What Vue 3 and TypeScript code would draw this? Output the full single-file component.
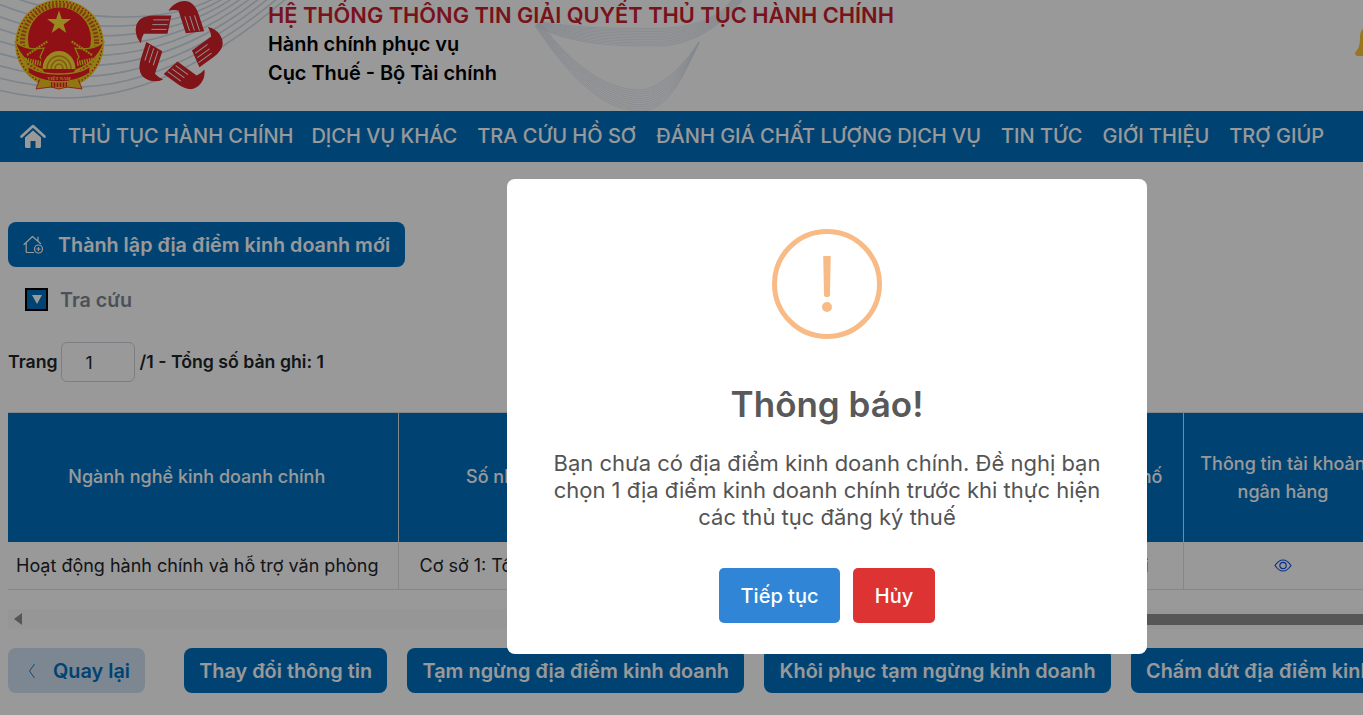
<script setup lang="ts">
const navItems: string[] = ['THỦ TỤC HÀNH CHÍNH', 'DỊCH VỤ KHÁC', 'TRA CỨU HỒ SƠ', 'ĐÁNH GIÁ CHẤT LƯỢNG DỊCH VỤ', 'TIN TỨC', 'GIỚI THIỆU', 'TRỢ GIÚP']
const actions: string[] = ['Thay đổi thông tin', 'Tạm ngừng địa điểm kinh doanh', 'Khôi phục tạm ngừng kinh doanh', 'Chấm dứt địa điểm kinh doanh']
const hands: number[] = [0, 72, 144, 216, 288]

const leftCurves: string[] = Array.from({ length: 9 }, (_, i) => {
  const a = -12 + i * 12.500
  return `M-10 ${a} C 80 ${a + 40 - i * 2} 170 ${a + 34 - i * 3} ${215 + i * 9} -2`
})
const deepWave: string[] = Array.from({ length: 11 }, (_, i) => {
  const d = i * 2.100
  return `M${535 + i * 0.5} ${26 - i * 0.4} C ${565 + i} 70 ${600 + i} ${111 - d} 640 ${111 - d} C ${668 - i} ${111 - d} 684 ${76 - d / 2} 699 42`
})
const shallowWave: string[] = Array.from({ length: 12 }, (_, i) => {
  const d = i * 1.600
  return `M${535 + i * 0.5} ${26 - i * 0.4} C 575 ${46 - d} 620 ${46 - d} 656 ${46 - d} C 692 ${46 - d} 722 ${26 - d / 2} ${744 - i} -2`
})
</script>

<template>
  <div class="page">
    <header class="header">
      <svg class="curves" viewBox="0 0 1363 111" width="1363" height="111" aria-hidden="true">
        <path v-for="(d, i) in leftCurves" :key="'l' + i" :d="d" class="curve-thick" />
        <path v-for="(d, i) in deepWave" :key="'d' + i" :d="d" class="curve-thin" />
        <path v-for="(d, i) in shallowWave" :key="'s' + i" :d="d" class="curve-thin" />
      </svg>

      <svg class="emblem" viewBox="0 0 92 94" width="92" height="94" aria-hidden="true">
        <circle cx="46.500" cy="46" r="44.500" fill="#f2d21f" />
        <circle cx="46.500" cy="46" r="42.500" fill="none" stroke="#e21d20" stroke-width="1.400" stroke-dasharray="1.500 2" />
        <circle cx="46.500" cy="44" r="37" fill="none" stroke="#d8611c" stroke-width="5" stroke-dasharray="2 1.700" />
        <circle cx="46.500" cy="41" r="31.500" fill="#ee1d23" />
        <polygon points="46,12.500 48.800,21.100 57.900,21.100 50.600,26.500 53.300,35.100 46,29.800 38.700,35.100 41.400,26.500 34.100,21.100 43.200,21.100" fill="#ffe135" />
        <path d="M2 44 C 10 50 20 52 31 50 L27 59 L36 74 C 22 70 8 62 2 44 Z" fill="#ee1d23" stroke="#f2d21f" stroke-width="1.200" />
        <path d="M91 44 C 83 50 73 52 62 50 L66 59 L57 74 C 71 70 85 62 91 44 Z" fill="#ee1d23" stroke="#f2d21f" stroke-width="1.200" />
        <path d="M14 57 L35 43 M79 57 L58 43" stroke="#f2d21f" stroke-width="2.200" stroke-dasharray="2 .8" fill="none" />
        <path d="M12 62 L30 66 M80 62 L62 66" stroke="#f2d21f" stroke-width="5" stroke-dasharray="1.500 1" fill="none" />
        <circle cx="46" cy="64" r="18" fill="#ee1d23" />
        <path d="M29.500 71 A16.500 18 0 0 1 62.500 71 Z" fill="#ffe135" />
        <path d="M34 71 A12 13 0 0 1 58 71 M38 71 A8 9 0 0 1 54 71 M42 71 A4 5 0 0 1 50 71" fill="none" stroke="#d9961a" stroke-width="1.500" />
        <path d="M28 78 L23 91 L38 89 L46 91 L54 89 L69 91 L64 78 Z" fill="#f2c51f" stroke="#e21d20" stroke-width=".8" />
        <path d="M38 81 h16 v8 h-16 Z" fill="#ee1d23" />
        <path d="M40 81 v8 M43 81 v8 M46 81 v8 M49 81 v8 M52 81 v8" stroke="#ffe135" stroke-width="1.100" />
        <path d="M15 68 C 22 74 34 76 46 76 C 58 76 70 74 77 68 L77 75 C 68 81 58 84 46 84 C 34 84 24 81 15 75 Z" fill="#ee1d23" stroke="#f2d21f" stroke-width="1.300" />
        <text x="46" y="81.500" class="emblem-text" text-anchor="middle">VIỆT NAM</text>
      </svg>

      <svg class="hands" viewBox="-50 -50 100 100" width="100" height="100" aria-hidden="true">
        <g v-for="deg in hands" :key="deg" :transform="`rotate(${deg}) scale(.95)`">
          <path d="M-6 -32 L-24 -32 Q-43 -32 -43.500 -17 Q-43.500 -9 -38 -3 Q-37.500 -9 -35 -13 L-10 -13 Z" fill="#d62229" />
          <path d="M-8 -27.500 H-25 M-10 -22.500 H-26 M-11 -17.500 H-27" stroke="#f2f2f2" stroke-width="1" fill="none" />
        </g>
      </svg>

      <div class="titles">
        <div class="title">HỆ THỐNG THÔNG TIN GIẢI QUYẾT THỦ TỤC HÀNH CHÍNH</div>
        <div class="subtitle">Hành chính phục vụ</div>
        <div class="subtitle">Cục Thuế - Bộ Tài chính</div>
      </div>

      <svg class="bell" viewBox="0 0 26 32" width="26" height="32" aria-hidden="true">
        <path d="M13 0 C 7 0 5 5 5 11 C 5 18 3.500 22 0.500 25 C -0.500 27 0.500 29 3 29 H23 C 25.500 29 26.500 27 25.500 25 C 22.500 22 21 18 21 11 C 21 5 19 0 13 0 Z" fill="#fdc43a" />
      </svg>
    </header>

    <nav class="nav">
      <svg class="home" viewBox="0 0 26 25" width="26" height="25" aria-hidden="true">
        <path d="M1.500 12.500 L13 2 L24.500 12.500" fill="none" stroke="#fff" stroke-width="2.600" stroke-linecap="round" stroke-linejoin="round" />
        <path d="M5 13.500 L13 6.500 L21 13.500 V22.500 Q21 24 19.500 24 H15.500 V17 H10.500 V24 H6.500 Q5 24 5 22.500 Z" fill="#fff" />
      </svg>
      <a v-for="item in navItems" :key="item" class="nav-item">{{ item }}</a>
    </nav>

    <main class="main">
      <button class="btn btn-add">
        <svg viewBox="0 0 21 19" width="21" height="19" fill="none" stroke="#fff" stroke-width="1.200" aria-hidden="true">
          <path d="M1 9.500 L9.500 1.500 L17.500 8.500 M15 2 V5.500 M3.200 8 V16.500 Q3.200 17.500 4.200 17.500 H10.500" stroke-linecap="round" stroke-linejoin="round" />
          <circle cx="15.500" cy="14" r="4" />
          <path d="M15.500 12 V16 M13.500 14 H17.500" />
        </svg>
        Thành lập địa điểm kinh doanh mới
      </button>

      <div class="search-toggle">
        <span class="toggle-box"><span class="toggle-tri"></span></span>
        <span>Tra cứu</span>
      </div>

      <div class="pager">
        <span>Trang</span>
        <input class="page-input" value="1" />
        <span>/1 - Tổng số bản ghi: 1</span>
      </div>

      <div class="table-wrap">
        <table class="table">
          <colgroup>
            <col style="width: 390px" />
            <col style="width: 564px" />
            <col style="width: 221px" />
            <col style="width: 200px" />
          </colgroup>
          <thead>
            <tr>
              <th class="th-first">Ngành nghề kinh doanh chính</th>
              <th class="th-addr">Số nhà, ngõ/ngách, hẻm, đường phố/tổ/xóm/thôn</th>
              <th class="th-right">Tỉnh/Thành phố</th>
              <th>Thông tin tài khoản ngân hàng</th>
            </tr>
          </thead>
          <tbody>
            <tr>
              <td>Hoạt động hành chính và hỗ trợ văn phòng</td>
              <td class="td-addr">Cơ sở 1: Tổ 5</td>
              <td class="td-link"><a>Hà Nội</a></td>
              <td class="td-eye">
                <svg viewBox="0 0 18 13" width="18" height="13" fill="none" stroke="#0f4fe6" stroke-width="1.200" aria-hidden="true">
                  <path d="M1 6.500 C 3.500 2.800 6 1 9 1 C 12 1 14.500 2.800 17 6.500 C 14.500 10.200 12 12 9 12 C 6 12 3.500 10.200 1 6.500 Z" />
                  <circle cx="9" cy="6.500" r="3.200" />
                </svg>
              </td>
            </tr>
          </tbody>
        </table>
      </div>

      <div class="scrollbar">
        <span class="scroll-arrow"></span>
        <span class="scroll-thumb"></span>
      </div>

      <div class="actions">
        <button class="btn btn-back">
          <svg viewBox="0 0 8 16" width="8" height="16" fill="none" stroke="#0070c0" stroke-width=".9" aria-hidden="true">
            <path d="M6.500 1 L1.500 8 L6.500 15" />
          </svg>
          Quay lại
        </button>
        <button v-for="a in actions" :key="a" class="btn btn-action">{{ a }}</button>
      </div>
    </main>

    <div class="overlay"></div>

    <div class="modal">
      <svg class="alert-icon" viewBox="0 0 110 110" width="110" height="110" aria-hidden="true">
        <circle cx="55" cy="55" r="52.500" fill="none" stroke="#f8bb86" stroke-width="5" />
        <path d="M51.200 27 H58.700 L58 66 Q58 68 55 68 Q52 68 52 66 Z" fill="#f8bb86" />
        <circle cx="55" cy="78" r="5" fill="#f8bb86" />
      </svg>
      <h2 class="modal-title">Thông báo!</h2>
      <p class="modal-text">Bạn chưa có địa điểm kinh doanh chính. Đề nghị bạn chọn 1 địa điểm kinh doanh chính trước khi thực hiện các thủ tục đăng ký thuế</p>
      <div class="modal-actions">
        <button class="modal-btn confirm">Tiếp tục</button>
        <button class="modal-btn cancel">Hủy</button>
      </div>
    </div>
  </div>
</template>

<style>
html, body { margin: 0; padding: 0; overflow: hidden; background: #fff; }
</style>

<style scoped>
.page {
  position: relative;
  width: 1363px;
  height: 715px;
  overflow: hidden;
  font-family: Inter, "Noto Sans", sans-serif;
  color: #212529;
  background: #fff;
}
.header {
  position: relative;
  height: 111px;
  display: flex;
  align-items: flex-start;
  overflow: hidden;
}
.curves { position: absolute; left: 0; top: 0; }
.curve-thick { fill: none; stroke: #cfdce9; stroke-width: 1.600; }
.curve-thin { fill: none; stroke: #dbe3ec; stroke-width: .7; }
.emblem { position: relative; flex: none; margin: -2px 0 0 13px; }
.hands { position: relative; flex: none; margin: -4px 0 0 22px; }
.titles { position: relative; flex: none; margin-left: 41px; }
.title {
  font-size: 21.800px;
  line-height: 30px;
  font-weight: 600;
  color: #c8202e;
  white-space: nowrap;
}
.subtitle {
  font-size: 19.900px;
  line-height: 29px;
  font-weight: 600;
  color: #000;
}
.bell { position: absolute; left: 1355px; top: 27px; }
.nav {
  height: 51px;
  background: #0070c0;
  display: flex;
  align-items: center;
  gap: 20px;
  padding-left: 20px;
}
.home { flex: none; margin-right: 2px; }
.nav-item {
  color: #fff;
  font-size: 20px;
  font-weight: 500;
  white-space: nowrap;
  margin-bottom: 2px;
}
.nav-item:first-of-type { margin-right: -2px; }
.main {
  padding: 60px 0 0 8px;
}
.btn {
  font-family: inherit;
  border: 0;
  border-radius: 8px;
  height: 45px;
  font-size: 19.850px;
  font-weight: 600;
  white-space: nowrap;
  display: inline-flex;
  align-items: center;
  flex: none;
}
.btn-add {
  background: #0070c0;
  color: #fff;
  padding: 0 15px;
  gap: 14px;
  font-size: 19.750px;
}
.search-toggle {
  display: flex;
  align-items: center;
  gap: 12px;
  margin: 21px 0 0 17px;
  height: 23px;
  font-size: 19.700px;
  font-weight: 600;
  color: #7e8894;
}
.toggle-box {
  width: 19px;
  height: 19px;
  box-sizing: content-box;
  border: 2px solid #000;
  background: #0070c0;
  display: flex;
  align-items: center;
  justify-content: center;
}
.toggle-tri {
  width: 0;
  height: 0;
  border-left: 5px solid transparent;
  border-right: 5px solid transparent;
  border-top: 9px solid #fff;
}
.pager {
  display: flex;
  align-items: center;
  gap: 5px;
  margin-top: 31px;
  font-size: 17.700px;
  font-weight: 600;
  color: #212529;
}
.pager span { padding-bottom: 2px; }
.page-input {
  width: 74px;
  height: 40px;
  box-sizing: border-box;
  border: 1px solid #ced4da;
  border-radius: 6px;
  padding: 0 0 0 24px;
  margin-left: -2px;
  font-family: inherit;
  font-size: 17.600px;
  color: #212529;
  background: #fff;
}
.table-wrap {
  margin-top: 30px;
  overflow: hidden;
  width: 1355px;
}
.table {
  border-collapse: collapse;
  table-layout: fixed;
  width: 1375px;
}
.table th {
  height: 129px;
  box-sizing: border-box;
  padding: 1px 16px 0;
  background: #0070c0;
  color: #fff;
  font-size: 18px;
  font-weight: 500;
  line-height: 28px;
  text-align: center;
  border: 1px solid #dee2e6;
  border-bottom-width: 0;
}
.table th:first-child, .table td:first-child { border-left: 0; }
.table th.th-first { padding: 0 28px 1px 16px; }
.table th.th-addr { padding: 0 20px 1px 16px; }
.table th.th-right { text-align: right; padding: 0 20px 1px 16px; }
.table td {
  height: 48px;
  box-sizing: border-box;
  padding: 0 8px;
  font-size: 18px;
  border: 1px solid #dee2e6;
  border-top: 0;
  white-space: nowrap;
  overflow: hidden;
}
.table .td-addr { padding-left: 21px; }
.table .td-link { text-align: right; color: #0070c0; padding-right: 34px; }
.table .td-eye { text-align: center; padding-bottom: 3px; }
.td-eye svg { display: inline-block; vertical-align: middle; }
.scrollbar {
  margin-top: 19px;
  height: 20px;
  width: 1355px;
  display: flex;
  align-items: center;
  background: #fbfbfb;
}
.scroll-arrow {
  margin-left: 6px;
  width: 0;
  height: 0;
  border-top: 6px solid transparent;
  border-bottom: 6px solid transparent;
  border-right: 8px solid #8f8f8f;
}
.scroll-thumb {
  margin-left: 600px;
  flex: 1;
  height: 11px;
  background: #8f8f8f;
}
.actions {
  display: flex;
  gap: 20px;
  margin-top: 19px;
  width: 1500px;
}
.btn-back {
  width: 137px;
  background: #cfe2f3;
  color: #0070c0;
  padding-left: 20px;
  gap: 17px;
  margin-right: 19px;
  box-sizing: border-box;
}
.btn-action {
  background: #0070c0;
  color: #fff;
  padding: 0 15.250px;
}
.overlay {
  position: absolute;
  inset: 0;
  background: rgba(0, 0, 0, .4);
}
.modal {
  position: absolute;
  left: 507px;
  top: 179px;
  width: 640px;
  height: 475px;
  box-sizing: border-box;
  background: #fff;
  border-radius: 8px;
  padding-top: 50px;
  display: flex;
  flex-direction: column;
  align-items: center;
}
.alert-icon { flex: none; display: block; }
.modal-title {
  margin: 43px 0 0;
  font-size: 35px;
  line-height: 44px;
  font-weight: 600;
  color: #595959;
}
.modal-text {
  margin: 24px 0 0;
  width: 560px;
  font-size: 22px;
  line-height: 27px;
  color: #545454;
  text-align: center;
}
.modal-actions {
  display: flex;
  gap: 13px;
  margin-top: 37px;
}
.modal-btn {
  height: 55px;
  border: 0;
  border-radius: 5px;
  color: #fff;
  font-family: inherit;
  font-size: 20px;
  font-weight: 500;
}
.confirm { width: 121px; background: #3085d6; }
.cancel { width: 82px; background: #dd3333; }
.emblem-text {
  font-family: "Liberation Serif", serif;
  font-size: 4.500px;
  font-weight: 700;
  fill: #ffe135;
}
</style>
